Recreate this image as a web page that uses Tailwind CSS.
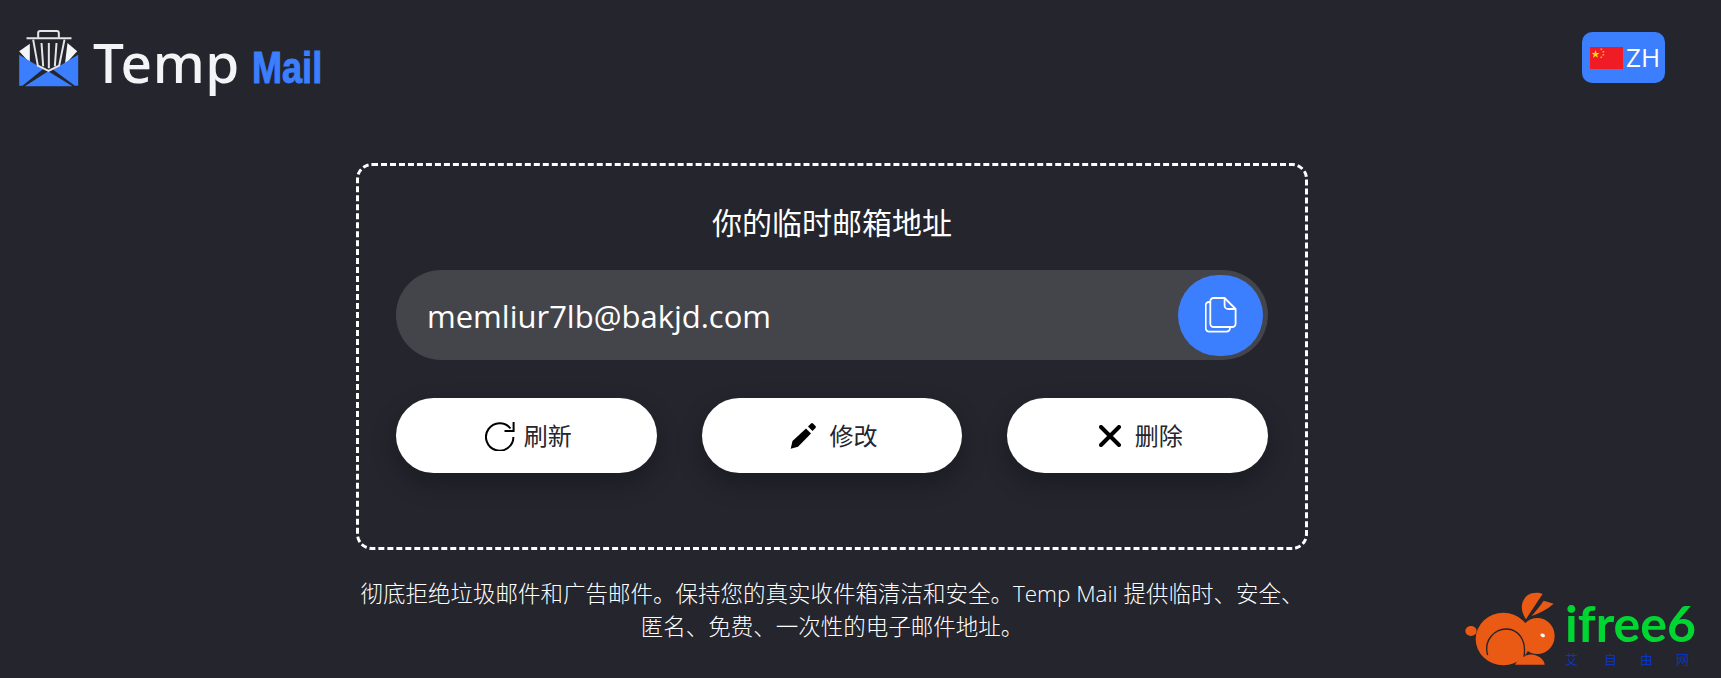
<!DOCTYPE html>
<html lang="zh-CN">
<head>
    <meta charset="UTF-8">
    <meta name="viewport" content="width=device-width, initial-scale=1.0">
    <title>Temp Mail</title>
    <script src="https://cdn.jsdelivr.net/npm/@tailwindcss/browser@4"></script>
</head>
<body class="relative h-[678px] overflow-hidden bg-[#24252d] text-white font-['Open_Sans','Noto_Sans_CJK_SC',sans-serif]">

    <!-- Header -->
    <header class="flex items-start justify-between h-[163px] pl-[18px] pr-[56px] pt-[28px]">
        <div class="flex items-start">
            <svg class="w-[62px] h-[60px]" viewBox="55 55 185 180">
                <polygon points="58,125 90,102 90,160" fill="#f4f5f6"/>
                <polygon points="203,100 232,125 195,165" fill="#f4f5f6"/>
                <polygon points="58,135 130,178 68,228 58,228" fill="#3b7efe"/>
                <polygon points="235,135 160,180 225,228 235,228" fill="#3b7efe"/>
                <polygon points="75,230 145,185 218,230" fill="#3b7efe"/>
                <g fill="none" stroke="#e4e5e6" stroke-width="6">
                    <path d="M80 86H215"/>
                    <path d="M115 84V70q0-6 6-6h50q6 0 6 6v14"/>
                    <path d="M100 90l14 78 32 16 32-16 16-78"/>
                    <path d="M125 100l5 70M147 100v76M170 100l-5 70"/>
                </g>
            </svg>
            <div class="flex items-baseline ml-[13px] mt-[-1px] h-[70px]">
                <span class="text-[55px] leading-[70px] font-medium tracking-[0.5px] text-[#f2f4f5] font-['Noto_Sans',sans-serif]">Temp</span>
                <span class="ml-[12px] text-[44px] leading-[70px] font-bold text-[#3b7efe] [-webkit-text-stroke:1px_#3b7efe] font-['Liberation_Sans',sans-serif] scale-x-[0.82] origin-left">Mail</span>
            </div>
        </div>
        <button class="flex items-center h-[51px] w-[83px] mt-[4px] pl-[8px] rounded-[10px] bg-[#3b7efe] text-[26px]">
            <svg class="w-[33px] h-[22px]" viewBox="0 0 33 22">
                <rect width="33" height="22" fill="#f01c25"/>
                <polygon points="5.5,3 6.5,6 9.5,6 7.1,7.8 8,10.8 5.5,9 3,10.8 3.9,7.8 1.5,6 4.5,6" fill="#ffde00"/>
                <g fill="#f5a623"><rect x="10.5" y="1.5" width="1.6" height="1.6"/><rect x="12.5" y="4" width="1.6" height="1.6"/><rect x="12.5" y="7" width="1.6" height="1.6"/><rect x="10.5" y="9.5" width="1.6" height="1.6"/></g>
            </svg>
            <span class="ml-[3px]">ZH</span>
        </button>
    </header>

    <main class="w-[952px] ml-[356px]">
        <section class="h-[387px] border-[3px] border-dashed border-white rounded-[16px] px-[37px] pt-[35px]">
            <h2 class="text-center text-[30px] leading-[44px] font-normal">你的临时邮箱地址</h2>

            <div class="flex items-center justify-between h-[90px] mt-[25px] pl-[31px] pr-[5px] rounded-full bg-[#44454b]">
                <span class="text-[31px] pt-[2px]">memliur7lb@bakjd.com</span>
                <button class="flex items-center justify-center w-[85px] h-[81px] rounded-full bg-[#3b7efe]">
                    <svg class="w-[32px] h-[36px]" viewBox="0 0 32 36" fill="none" stroke="white" stroke-width="1.8" stroke-linejoin="round">
                        <path d="M5.3 5H4a3.3 3.3 0 0 0-3.3 3.3v23A3.3 3.3 0 0 0 4 34.6h17.7a3.3 3.3 0 0 0 3.3-3.3V30"/>
                        <path d="M19.6 1H8.6a3.3 3.3 0 0 0-3.3 3.3v22.4A3.3 3.3 0 0 0 8.6 30h18.7a3.3 3.3 0 0 0 3.3-3.3V12z"/>
                        <path d="M19.6 1v7.5a3.5 3.5 0 0 0 3.5 3.5h7.5"/>
                    </svg>
                </button>
            </div>

            <div class="grid grid-cols-3 gap-[45px] mt-[38px] text-[#24252d]">
                <button class="flex items-center justify-center h-[75px] pl-[4px] rounded-full bg-white text-[24px] shadow-[0_10px_25px_rgba(0,0,0,0.25)]">
                    <svg class="w-[30px] h-[30px] mr-[9px]" viewBox="0 0 30 30" fill="none" stroke="black" stroke-width="2">
                        <path d="M25.5 7.5A13.7 13.7 0 1 0 28.4 16"/>
                        <path d="M28.6 1v9H19.5"/>
                    </svg>
                    <span>刷新</span>
                </button>
                <button class="flex items-center justify-center h-[75px] pl-[4px] rounded-full bg-white text-[24px] shadow-[0_10px_25px_rgba(0,0,0,0.25)]">
                    <svg class="w-[27px] h-[27px] mr-[12px]" viewBox="0 0 27 27" fill="black">
                        <path d="M0.7 26.7L2.5 19L16 6.5L21 11.5L8 24.8Z"/>
                        <path d="M18 4.5l3-3a1.5 1.5 0 0 1 2 0l2.5 2.5a1.5 1.5 0 0 1 0 2l-3 3z"/>
                    </svg>
                    <span>修改</span>
                </button>
                <button class="flex items-center justify-center h-[75px] pl-[6px] rounded-full bg-white text-[24px] shadow-[0_10px_25px_rgba(0,0,0,0.25)]">
                    <svg class="w-[22px] h-[22px] mr-[14px]" viewBox="0 0 22 22" fill="none" stroke="black" stroke-width="4" stroke-linecap="round">
                        <path d="M2 2L20 20M20 2L2 20"/>
                    </svg>
                    <span>删除</span>
                </button>
            </div>
        </section>

        <p class="mt-[27px] text-center text-[22.5px] leading-[33px] font-light">彻底拒绝垃圾邮件和广告邮件。保持您的真实收件箱清洁和安全。Temp Mail 提供临时、安全、<br>匿名、免费、一次性的电子邮件地址。</p>
    </main>

    <!-- Watermark -->
    <div class="absolute right-0 bottom-0 w-[271px] h-[98px]">
        <svg class="absolute inset-0 w-[271px] h-[98px]" viewBox="0 0 813 294">
            <ellipse cx="63" cy="153" rx="17" ry="15" fill="#eb5a14"/>
            <ellipse cx="160" cy="177" rx="83" ry="79" fill="#eb5a14"/>
            <ellipse cx="262" cy="168" rx="52" ry="54" fill="#eb5a14"/>
            <path d="M195 254C205 232 230 222 250 224C270 228 283 240 284 254Z" fill="#eb5a14"/>
            <path d="M228 118C205 85 215 50 245 40C258 37 270 38 278 42C262 66 244 92 228 118Z" fill="#eb5a14"/>
            <path d="M245 108C258 92 270 78 281 62L311 71C292 88 268 100 245 108Z" fill="#eb5a14"/>
            <path d="M113 225C100 180 135 146 170 147C205 148 230 180 222 230" fill="none" stroke="#24252d" stroke-width="4"/>
            <ellipse cx="278" cy="166" rx="7" ry="5" fill="white" transform="rotate(20 278 166)"/>
        </svg>
        <span class="absolute left-[115px] top-[17px] text-[50px] leading-[52px] font-bold text-[#00d632] font-['Lato',sans-serif]">ifree6</span>
        <div class="absolute left-[115px] top-[71px] flex text-[13px] leading-[16px] text-[#0a35c0] font-['Noto_Sans_CJK_SC',sans-serif]">
            <span class="w-[39px]">艾</span><span class="w-[36px]">自</span><span class="w-[36px]">由</span><span>网</span>
        </div>
    </div>
</body>
</html>
